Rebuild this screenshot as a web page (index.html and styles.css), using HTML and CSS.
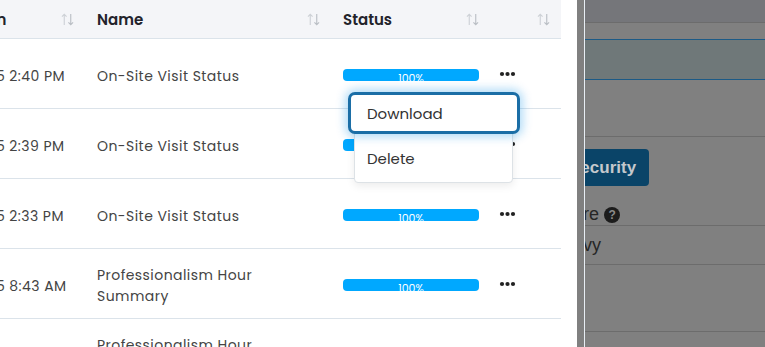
FILE: index.html
```html
<!DOCTYPE html>
<html lang="en">
<head>
    <meta charset="UTF-8">
    <meta name="viewport" content="width=device-width, initial-scale=1.0">
    <title>Reports</title>
    <link rel="stylesheet" href="styles.css">
</head>
<body>
    <!-- Drawer with the reports table -->
    <div class="drawer">
        <div class="table-wrap">
            <div class="table">
                <div class="row head">
                    <div class="cell"><span>Created On</span><svg class="sort" viewBox="0 0 14 14"><path d="M3.5 13V1.5M1 4l2.5-2.5L6 4"/><path class="down" d="M10.5 1v11.5M8 10l2.5 2.5L13 10"/></svg></div>
                    <div class="cell"><span>Name</span><svg class="sort" viewBox="0 0 14 14"><path d="M3.5 13V1.5M1 4l2.5-2.5L6 4"/><path class="down" d="M10.5 1v11.5M8 10l2.5 2.5L13 10"/></svg></div>
                    <div class="cell"><span>Status</span><svg class="sort" viewBox="0 0 14 14"><path d="M3.5 13V1.5M1 4l2.5-2.5L6 4"/><path class="down" d="M10.5 1v11.5M8 10l2.5 2.5L13 10"/></svg></div>
                    <div class="cell"><span></span><svg class="sort" viewBox="0 0 14 14"><path d="M3.5 13V1.5M1 4l2.5-2.5L6 4"/><path class="down" d="M10.5 1v11.5M8 10l2.5 2.5L13 10"/></svg></div>
                </div>

                <div class="row">
                    <div class="cell text">03/05/2025 2:40 PM</div>
                    <div class="cell text">On-Site Visit Status</div>
                    <div class="cell"><div class="progress">100%</div></div>
                    <div class="cell"><svg class="more" viewBox="0 0 18 6"><circle cx="3" cy="3" r="2.1"/><circle cx="8.5" cy="3" r="2.1"/><circle cx="14" cy="3" r="2.1"/></svg></div>
                </div>
                <div class="row">
                    <div class="cell text">03/05/2025 2:39 PM</div>
                    <div class="cell text">On-Site Visit Status</div>
                    <div class="cell"><div class="progress">100%</div></div>
                    <div class="cell"><svg class="more" viewBox="0 0 18 6"><circle cx="3" cy="3" r="2.1"/><circle cx="8.5" cy="3" r="2.1"/><circle cx="14" cy="3" r="2.1"/></svg></div>
                </div>
                <div class="row">
                    <div class="cell text">03/05/2025 2:33 PM</div>
                    <div class="cell text">On-Site Visit Status</div>
                    <div class="cell"><div class="progress">100%</div></div>
                    <div class="cell"><svg class="more" viewBox="0 0 18 6"><circle cx="3" cy="3" r="2.1"/><circle cx="8.5" cy="3" r="2.1"/><circle cx="14" cy="3" r="2.1"/></svg></div>
                </div>
                <div class="row">
                    <div class="cell text">03/05/2025 8:43 AM</div>
                    <div class="cell text">Professionalism Hour Summary</div>
                    <div class="cell"><div class="progress">100%</div></div>
                    <div class="cell"><svg class="more" viewBox="0 0 18 6"><circle cx="3" cy="3" r="2.1"/><circle cx="8.5" cy="3" r="2.1"/><circle cx="14" cy="3" r="2.1"/></svg></div>
                </div>
                <div class="row">
                    <div class="cell text">03/04/2025 8:40 AM</div>
                    <div class="cell text">Professionalism Hour Summary</div>
                    <div class="cell"><div class="progress">100%</div></div>
                    <div class="cell"><svg class="more" viewBox="0 0 18 6"><circle cx="3" cy="3" r="2.1"/><circle cx="8.5" cy="3" r="2.1"/><circle cx="14" cy="3" r="2.1"/></svg></div>
                </div>
            </div>

            <!-- Row actions menu -->
            <ul class="menu">
                <li class="menu-item focused">Download</li>
                <li class="menu-item">Delete</li>
            </ul>
        </div>
    </div>

    <!-- Dimmed page behind the drawer -->
    <div class="page">
        <div class="band top"></div>
        <div class="band plain"></div>
        <div class="band selected"></div>
        <div class="band tall"></div>
        <div class="band settings">
            <button class="btn-security">Security</button>
            <div class="label"><span>Signature</span><span class="help">?</span></div>
        </div>
        <div class="band privacy"><span class="clip-vy">Heavy</span></div>
        <div class="band empty"></div>
    </div>
</body>
</html>
```

FILE: styles.css
```css
body {
    margin: 0;
    padding: 0;
    height: 347px;
    overflow: hidden;
    background-color: #808080;
    display: flex;
    font-family: 'Poppins', 'Inter', sans-serif;
}

/* Drawer */
.drawer {
    width: 577px;
    flex-shrink: 0;
    background-color: #ffffff;
    padding-right: 16px;
    box-sizing: border-box;
}

.table-wrap {
    position: relative;
    width: 561px;
    height: 347px;
    overflow: hidden;
}

.table {
    margin-left: -93px;
    width: 654px;
}

.row {
    display: grid;
    grid-template-columns: 178px 246px 159px 71px;
    height: 70px;
    border-bottom: 1px solid #dbe3ea;
    box-sizing: border-box;
}

.row.head {
    height: 39px;
    background-color: #f4f5f8;
}

.cell {
    display: flex;
    align-items: center;
    padding: 0 11px 0 12px;
    font-size: 14px;
    line-height: 21px;
    color: #444444;
    min-width: 0;
}

.cell.text {
    padding-top: 5px;
    letter-spacing: 0.45px;
}

.head .cell {
    justify-content: space-between;
    font-size: 15px;
    font-weight: 600;
    color: #23232b;
}

.sort {
    width: 13px;
    height: 13px;
    fill: none;
    stroke: #cdd1d6;
    stroke-width: 1.2;
    flex-shrink: 0;
}

.sort .down {
    stroke: #b9bec4;
}

.progress {
    width: 100%;
    height: 12px;
    margin-top: 3px;
    background-color: #00a8ff;
    border-radius: 4px;
    color: #ffffff;
    font-size: 11px;
    line-height: 12px;
    padding-top: 3px;
    box-sizing: border-box;
    text-align: center;
    overflow: hidden;
}

.more {
    width: 18px;
    height: 6px;
    fill: #222222;
    margin-left: -3px;
}

/* Actions menu */
.menu {
    position: absolute;
    top: 96px;
    left: 354px;
    width: 159px;
    margin: 0;
    padding: 0;
    list-style-type: none;
    background-color: #ffffff;
    border: 1px solid #dde2e6;
    border-radius: 4px;
    box-shadow: 0 3px 8px rgba(0, 0, 0, 0.08);
    box-sizing: border-box;
}

.menu-item {
    display: flex;
    align-items: center;
    height: 48px;
    padding-left: 12px;
    font-size: 15px;
    color: #333333;
}

.menu-item.focused {
    height: 42px;
    margin: -5px -8px 0 -7px;
    padding-left: 16px;
    border: 3px solid #1b6ea6;
    border-radius: 7px;
    background-color: #ffffff;
    box-shadow: 0 0 10px 3px rgba(0, 140, 230, 0.3);
    box-sizing: border-box;
}

/* Dimmed page */
.page {
    flex: 1;
    margin-left: 7px;
    border-left: 1px solid #e8eef4;
    overflow: hidden;
    display: flex;
    flex-direction: column;
    font-family: 'Liberation Sans', Arial, sans-serif;
}

.band {
    border-bottom: 1px solid #6c6c6c;
    flex-shrink: 0;
}

.band.top {
    height: 22px;
    background-color: #75767a;
}

.band.plain {
    height: 16px;
    border-bottom-color: #1c5a86;
}

.band.selected {
    height: 39px;
    background-color: #6f7879;
    border-bottom-color: #1c5a86;
}

.band.tall {
    height: 56px;
}

.band.settings {
    height: 88px;
    display: flex;
    flex-direction: column;
    align-items: flex-start;
}

.btn-security {
    margin: 12px 0 0 -29px;
    height: 38px;
    padding: 0 13px;
    border: none;
    border-radius: 4px;
    background-color: #0a4468;
    color: #c4c8cc;
    font-family: 'Liberation Sans', Arial, sans-serif;
    font-size: 17px;
    font-weight: bold;
}

.label {
    display: flex;
    align-items: center;
    margin: 18px 0 0 -63px;
    font-size: 18px;
    color: #262626;
}

.help {
    display: inline-flex;
    justify-content: center;
    align-items: center;
    width: 16px;
    height: 16px;
    margin-left: 5px;
    border-radius: 50%;
    background-color: #1c1c1c;
    color: #8a8a8a;
    font-size: 12px;
    font-weight: bold;
}

.band.privacy {
    height: 38px;
    display: flex;
    align-items: center;
    font-size: 18px;
    color: #262626;
}

.clip-vy {
    margin-left: -35px;
}

.band.empty {
    height: 66px;
}
```
